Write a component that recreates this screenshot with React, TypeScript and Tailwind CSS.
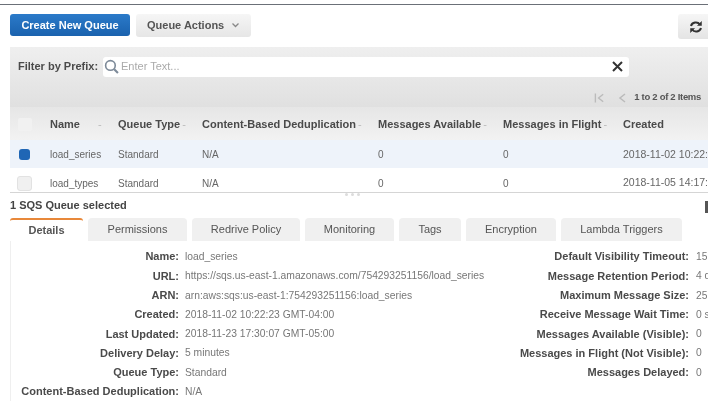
import React from 'react';

const left = [
  ['Name:', 'load_series'],
  ['URL:', 'https://sqs.us-east-1.amazonaws.com/754293251156/load_series'],
  ['ARN:', 'arn:aws:sqs:us-east-1:754293251156:load_series'],
  ['Created:', '2018-11-02 10:22:23 GMT-04:00'],
  ['Last Updated:', '2018-11-23 17:30:07 GMT-05:00'],
  ['Delivery Delay:', '5 minutes'],
  ['Queue Type:', 'Standard'],
  ['Content-Based Deduplication:', 'N/A'],
];

const right = [
  ['Default Visibility Timeout:', '15 seconds'],
  ['Message Retention Period:', '4 days'],
  ['Maximum Message Size:', '256 KB'],
  ['Receive Message Wait Time:', '0 seconds'],
  ['Messages Available (Visible):', '0'],
  ['Messages in Flight (Not Visible):', '0'],
  ['Messages Delayed:', '0'],
];

const tabs = [
  { label: 'Permissions', w: 'w-[99px]' },
  { label: 'Redrive Policy', w: 'w-[108px]' },
  { label: 'Monitoring', w: 'w-[89px]' },
  { label: 'Tags', w: 'w-[62px]' },
  { label: 'Encryption', w: 'w-[90px]' },
  { label: 'Lambda Triggers', w: 'w-[121px]' },
];

const cols = 'grid grid-cols-[40px_68px_84px_176px_125px_120px_1fr]';

const Sort = () => <span className="ml-[2px] text-[#bbb] font-normal">-</span>;

const Row = ({ name, created, selected }: { name: string; created: string; selected?: boolean }) => (
  <div className={`${cols} items-center text-[10px] text-[#666] whitespace-nowrap ${selected ? 'h-[28px] pt-[1px] bg-[#eef3fa]' : 'h-[24px] pt-[6px] bg-white'}`}>
    <div className={selected ? 'pl-[9px]' : 'pl-[7px]'}>
      {selected ? (
        <div className="w-[11px] h-[11px] rounded-[3px] bg-[#1f66b5]" />
      ) : (
        <div className="w-[15px] h-[15px] rounded-[3px] bg-[#f0f0f0] border border-[#e2e2e2]" />
      )}
    </div>
    <div>{name}</div>
    <div>Standard</div>
    <div>N/A</div>
    <div>0</div>
    <div>0</div>
    <div className="text-[10.500px]">{created}</div>
  </div>
);

export default function App() {
  return (
    <div className="relative w-[708px] h-[402px] overflow-hidden bg-white font-['Liberation_Sans',Arial,sans-serif] blur-[0.5px]">
      <div className="h-[4px]" />
      <div className="h-[1px] bg-[#6b7078]" />

      <div className="h-[42px] flex items-start pt-[9px] pl-[10px]">
        <button className="w-[120px] h-[22px] rounded-[3px] bg-gradient-to-b from-[#2b7ac9] to-[#1a62ae] text-white text-[11px] font-bold">
          Create New Queue
        </button>
        <button className="ml-[6px] w-[115px] h-[23px] rounded-[3px] bg-gradient-to-b from-[#f6f6f6] to-[#e6e6e6] text-[#555] text-[11px] font-bold flex items-center pl-[11px]">
          Queue Actions
          <svg className="ml-[8px]" width="7" height="5" viewBox="0 0 7 5" fill="none" stroke="#888" strokeWidth="1.300">
            <path d="M0.500 0.500L3.500 3.500L6.500 0.500" />
          </svg>
        </button>
        <div className="ml-auto w-[30px] h-[25px] rounded-l-[3px] bg-gradient-to-b from-[#f6f6f6] to-[#e4e4e4] flex items-center justify-end pr-[5px]">
          <svg width="14" height="14" viewBox="0 0 14 14" fill="none" stroke="#333" strokeWidth="2">
            <path d="M2 6a5 4.500 0 0 1 9-1.500" />
            <path d="M12 8a5 4.500 0 0 1-9 1.500" />
            <path d="M12.500 1.500v4h-4z" fill="#333" strokeWidth="0.500" />
            <path d="M1.500 12.500v-4h4z" fill="#333" strokeWidth="0.500" />
          </svg>
        </div>
      </div>

      <div className="ml-[10px]">
        <div className="h-[60px] bg-gradient-to-b from-[#efefef] to-[#e0e0e0]">
          <div className="flex items-center h-[33px] pt-[6px] pl-[8px]">
            <span className="w-[85px] text-[11px] font-bold text-[#4a4a4a] whitespace-nowrap">Filter by Prefix:</span>
            <div className="w-[526px] h-[20px] rounded-[3px] bg-white flex items-center pl-[1px] pr-[6px]">
              <svg width="15" height="15" viewBox="0 0 14 14" fill="none" stroke="#7d8a99" strokeWidth="1.500">
                <circle cx="6" cy="6" r="4.500" />
                <path d="M9.500 9.500l3.500 3.500" strokeWidth="2" />
              </svg>
              <span className="ml-[2px] text-[11px] text-[#aaa]">Enter Text...</span>
              <svg className="ml-auto" width="11" height="11" viewBox="0 0 11 11" stroke="#333" strokeWidth="2">
                <path d="M1 1l9 9M10 1l-9 9" />
              </svg>
            </div>
          </div>
          <div className="flex items-center justify-end h-[27px] pt-[8px] pr-[7px] text-[#bbb]">
            <svg width="11" height="10" viewBox="0 0 12 10" fill="none" stroke="#bbb" strokeWidth="1.500">
              <path d="M1.500 0v10M10 1L5 5l5 4" />
            </svg>
            <svg className="ml-[13px]" width="8" height="10" viewBox="0 0 8 10" fill="none" stroke="#bbb" strokeWidth="1.500">
              <path d="M7 1L2 5l5 4" />
            </svg>
            <span className="ml-[8px] text-[9.500px] font-bold tracking-[-0.3px] text-[#555]">1 to 2 of 2 Items</span>
          </div>
        </div>
      </div>

      <div className="ml-[10px] overflow-hidden border-b border-[#d5d5d5]">
        <div className={`${cols} h-[33px] pt-[1px] items-center bg-gradient-to-b from-[#e6e6e6] to-[#f2f2f2] text-[11px] font-bold text-[#4a4a4a] whitespace-nowrap`}>
          <div className="pl-[8px]">
            <div className="w-[14px] h-[13px] rounded-[2px] bg-[#f1f1f1]" />
          </div>
          <div>Name<span className="ml-[18px] text-[#bbb] font-normal">-</span></div>
          <div>Queue Type<Sort /></div>
          <div>Content-Based Deduplication<Sort /></div>
          <div>Messages Available<Sort /></div>
          <div>Messages in Flight<Sort /></div>
          <div>Created</div>
        </div>
        <Row name="load_series" created="2018-11-02 10:22:23" selected />
        <Row name="load_types" created="2018-11-05 14:17:01" />
      </div>

      <div className="flex justify-center gap-[3px] h-[3px] pr-[4px]">
        {[0, 1, 2].map((i) => (
          <div key={i} className="w-[3px] h-[3px] rounded-full bg-[#dcdcdc]" />
        ))}
      </div>

      <div className="pl-[10px] pt-[1px] h-[22px] text-[11px] font-bold text-[#444]">1 SQS Queue selected</div>

      <div className="flex ml-[10px] h-[23px] gap-[5px] text-[11px] text-[#555]">
        <div className="w-[73px] border-t-2 border-[#e8883a] rounded-t-[3px] bg-white font-bold flex items-center justify-center pb-[1px]">
          Details
        </div>
        {tabs.map((t) => (
          <div key={t.label} className={`${t.w} rounded-t-[4px] bg-[#f0f0f0] flex items-center justify-center`}>
            {t.label}
          </div>
        ))}
      </div>

      <div className="flex ml-[10px] border-l border-[#efefef] pt-[6px] text-[10.300px] whitespace-nowrap">
        <div className="w-[479px] shrink-0">
          {left.map(([k, v]) => (
            <div key={k} className="flex items-center h-[19.300px]">
              <div className="w-[168px] text-right font-bold text-[11px] text-[#4a4a4a]">{k}</div>
              <div className="ml-[6px] text-[#777]">{v}</div>
            </div>
          ))}
        </div>
        <div className="flex-1 overflow-hidden">
          {right.map(([k, v]) => (
            <div key={k} className="flex items-center h-[19.300px]">
              <div className="w-[199px] shrink-0 text-right font-bold text-[11px] text-[#4a4a4a]">{k}</div>
              <div className="ml-[7px] text-[#777]">{v}</div>
            </div>
          ))}
        </div>
      </div>

      <div className="absolute right-0 top-[201px] w-[3px] h-[12px] bg-[#555]" />
    </div>
  );
}
